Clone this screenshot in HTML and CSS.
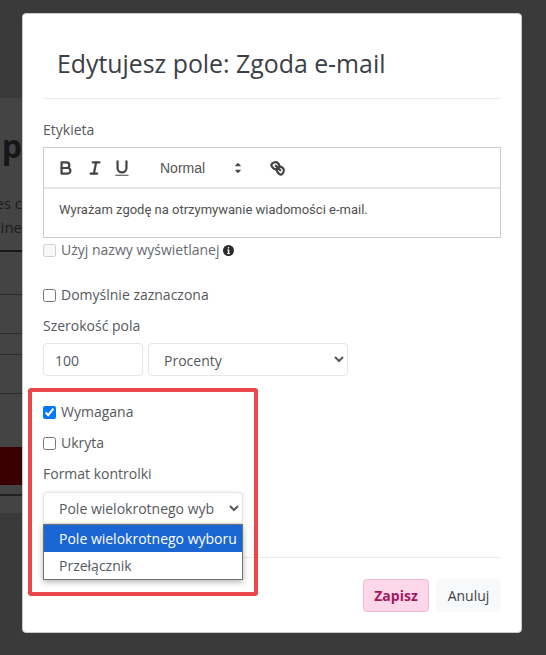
FILE: index.html
```html
<!DOCTYPE html>
<html lang="pl">
<head>
<meta charset="utf-8">
<title>Edytujesz pole</title>
<link rel="stylesheet" href="styles.css">
</head>
<body>
<div class="page">
  <div class="page-top"></div>
  <div class="page-main">
    <div class="page-heading">Grup</div>
    <div class="page-line page-line-a">Zgodnie es c</div>
    <div class="page-line page-line-b">Online</div>
    <div class="tab-rule"></div>
    <div class="row row-a"></div>
    <div class="row row-b"></div>
    <div class="row row-c"></div>
    <div class="row row-d"></div>
    <div class="red-band"></div>
    <div class="footer-rule"></div>
  </div>
</div>

<div class="modal">
  <header class="modal-header"><h1 class="modal-title">Edytujesz pole: Zgoda e-mail</h1></header>
  <div class="modal-body">
    <label class="field-label label-first">Etykieta</label>
    <div class="editor">
      <div class="toolbar">
        <svg class="tb-icon tb-bold" viewBox="0 0 18 18"><path class="st" d="M5,4H9.5A2.5,2.5,0,0,1,12,6.5v0A2.5,2.5,0,0,1,9.5,9H5A0,0,0,0,1,5,9V4A0,0,0,0,1,5,4Z"/><path class="st" d="M5,9h5.5A2.5,2.5,0,0,1,13,11.5v0A2.5,2.5,0,0,1,10.5,14H5a0,0,0,0,1,0,0V9A0,0,0,0,1,5,9Z"/></svg>
        <svg class="tb-icon tb-italic" viewBox="0 0 18 18"><line class="st" x1="7" x2="13" y1="4" y2="4"/><line class="st" x1="5" x2="11" y1="14" y2="14"/><line class="st" x1="8" x2="10" y1="14" y2="4"/></svg>
        <svg class="tb-icon tb-under" viewBox="0 0 18 18"><path class="st" d="M5,3V9a4.012,4.012,0,0,0,4,4H9a4.012,4.012,0,0,0,4-4V3"/><rect class="fl" x="3" y="15" width="12" height="1" rx=".5" ry=".5"/></svg>
        <span class="picker-label">Normal</span>
        <svg class="tb-icon tb-arrows" viewBox="0 0 18 18"><polygon class="st-thin" points="7 11 9 13 11 11 7 11"/><polygon class="st-thin" points="7 7 9 5 11 7 7 7"/></svg>
        <svg class="tb-icon tb-link" viewBox="0 0 18 18"><line class="st" x1="7" x2="11" y1="7" y2="11"/><path class="st" d="M8.9,4.577a3.476,3.476,0,0,1,.36,4.679A3.476,3.476,0,0,1,4.577,8.9C3.185,7.5,2.35,6.4,3.7,5.1,5.05,3.84,7.5,3.19,8.9,4.577Z"/><path class="st" d="M13.423,9.1a3.476,3.476,0,0,0-4.679-.36,3.476,3.476,0,0,0,.36,4.679c1.392,1.392,2.5,2.227,3.778.911C14.16,12.95,14.81,10.5,13.423,9.1Z"/></svg>
      </div>
      <div class="editor-text">Wyrażam zgodę na otrzymywanie wiadomości e-mail.</div>
    </div>

    <label class="check check-display">
      <input type="checkbox" disabled>
      <span>Użyj nazwy wyświetlanej</span>
      <svg class="info" viewBox="0 0 16 16"><circle class="info-disc" cx="8" cy="8" r="8"/><rect class="info-mark" x="6.9" y="3" width="2.2" height="2.2" rx="1"/><path class="info-mark" d="M6.2 6.6h2.9v5.2h1v1.4H6.1v-1.4h1V8H6.2z"/></svg>
    </label>
    <label class="check check-default"><input type="checkbox"><span>Domyślnie zaznaczona</span></label>

    <label class="field-label label-width">Szerokość pola</label>
    <div class="width-row">
      <input class="control width-value" type="text" value="100">
      <select class="control width-unit"><option>Procenty</option><option>Piksele</option></select>
    </div>

    <label class="check check-required"><input type="checkbox" checked><span>Wymagana</span></label>
    <label class="check check-hidden"><input type="checkbox"><span>Ukryta</span></label>

    <label class="field-label label-format">Format kontrolki</label>
    <select class="control format-select"><option>Pole wielokrotnego wyboru</option><option>Przełącznik</option></select>
  </div>
  <footer class="modal-footer">
    <button class="btn btn-save" type="button">Zapisz</button>
    <button class="btn btn-cancel" type="button">Anuluj</button>
  </footer>

  <div class="highlight"></div>
  <ul class="dropdown">
    <li class="option option-active">Pole wielokrotnego wyboru</li>
    <li class="option">Przełącznik</li>
  </ul>
</div>
</body>
</html>
```
FILE: styles.css
```css
* { box-sizing: border-box; }
html, body { margin: 0; padding: 0; height: 100%; }
body {
  background: #3a3a3a;
  font-family: "Open Sans", sans-serif;
  font-size: 14px;
  color: #55595e;
  overflow: hidden;
}

/* dimmed page behind the modal */
.page { width: 22px; height: 655px; overflow: hidden; }
.page-top { height: 98px; background: #3a3a3a; }
.page-main { height: 415px; background: #444; display: flow-root; }
.page-heading, .page-line { white-space: nowrap; direction: rtl; text-align: right; color: #161616; }
.page-heading { margin-top: 28px; height: 40px; line-height: 40px; font-size: 32px; font-weight: 700; }
.page-line { font-size: 15px; line-height: 24px; color: #1c1c1c; }
.page-line-a { margin-top: 25px; }
.tab-rule { height: 2px; margin-top: 11px; background: #17171c; }
.row { border-bottom: 1px solid #2a2a2a; }
.row-a { height: 43px; }
.row-b { height: 39px; }
.row-c { height: 21px; }
.row-d { height: 39px; }
.red-band { height: 38px; margin-top: 53px; background: #380000; }
.footer-rule { height: 2px; margin-top: 9px; background: #222; }

/* modal */
.modal {
  position: absolute;
  left: 22px;
  top: 13px;
  width: 500px;
  height: 620px;
  background: #fff;
  border-radius: 4px;
  border: 1px solid #c9c9c9;
  display: flex;
  flex-direction: column;
}
.modal-header { margin: 0 20px; height: 85px; border-bottom: 1px solid #e9ecef; padding: 33px 0 0 14px; }
.modal-title { margin: 0; font-size: 24.85px; line-height: 33px; font-weight: 400; color: #3b4046; }
.modal-body { flex: 1; padding: 0 20px; }

.field-label { display: block; line-height: 20px; color: #55595e; }
.label-first { margin-top: 21px; }
.label-width { margin-top: 11px; }
.label-format { margin-top: 11px; }

.editor { margin-top: 7px; height: 91px; border: 1px solid #ccc; }
.toolbar { height: 41px; border-bottom: 2px solid #e6e6e6; display: flex; align-items: center; padding-left: 12px; color: #444; }
.tb-icon { width: 20px; height: 20px; flex: none; }
.st { fill: none; stroke: #444; stroke-width: 2; stroke-linecap: round; stroke-linejoin: round; }
.st-thin { fill: #444; stroke: #444; stroke-width: 1; stroke-linejoin: round; }
.fl { fill: #444; }
.tb-italic { margin-left: 9px; }
.tb-under { margin-left: 7px; }
.picker-label { margin-left: 28px; width: 68px; font-family: "Liberation Sans", sans-serif; font-size: 14px; color: #555; }
.tb-arrows { margin-left: 0; }
.tb-link { margin-left: 20px; }
.editor-text { padding: 12px 15px; font-family: Roboto, sans-serif; font-size: 13px; line-height: 18px; color: #505050; }

.check { display: flex; align-items: center; gap: 5px; height: 20px; line-height: 20px; }
.check input { margin: 0; width: 13px; height: 13px; flex: none; }
.check-display { margin-top: 2px; color: #666a6f; }
.check-default { margin-top: 25px; }
.check-required { margin-top: 26px; }
.check-hidden { margin-top: 11px; }
.info { width: 11px; height: 11px; margin-left: -1px; }
.info-disc { fill: #2b2b2b; }
.info-mark { fill: #fff; }

.control {
  height: 33px;
  border: 1px solid #e3e6ea;
  border-radius: 4px;
  background: #fff;
  font-family: "Open Sans", sans-serif;
  font-size: 14px;
  color: #55595e;
  padding: 2px 11px 0;
  outline: none;
}
.width-row { display: flex; gap: 5px; margin-top: 7px; }
.width-value { width: 100px; }
.width-unit { width: 200px; padding-left: 11px; }
.format-select { display: block; width: 200px; height: 32px; margin-top: 8px; padding: 0 12.5px 0 11px; box-shadow: 0 0 3px rgba(0,0,0,.12); }

.modal-footer { margin: 0 20px; height: 75px; border-top: 1px solid #e9ecef; display: flex; justify-content: flex-end; gap: 7px; padding-top: 21px; }
.btn { width: 65px; height: 33px; border-radius: 4px; font-family: "Open Sans", sans-serif; font-size: 14px; padding: 0; }
.btn-save { width: 66px; background: #fbd7e9; border: 1px solid #f5b8d5; color: #a3175f; font-weight: 700; }
.btn-cancel { background: #f8f9fa; border: 1px solid #f8f9fa; color: #3f444a; }

/* annotation + open select list, both lying over the form */
.highlight {
  position: absolute;
  left: 5px;
  top: 374px;
  width: 230px;
  height: 208px;
  border: 4px solid #e8474c;
  border-radius: 3px;
  pointer-events: none;
}
.dropdown {
  position: absolute;
  left: 20px;
  top: 510px;
  width: 200px;
  height: 56px;
  margin: 0;
  padding: 0;
  list-style: none;
  background: #fff;
  border: 1px solid #6e7277;
  box-shadow: 0 2px 6px rgba(0,0,0,.3);
}
.option { height: 27px; line-height: 27px; padding-left: 15px; white-space: nowrap; color: #55595e; }
.option-active { background: #1a66d2; color: #fff; }
```
